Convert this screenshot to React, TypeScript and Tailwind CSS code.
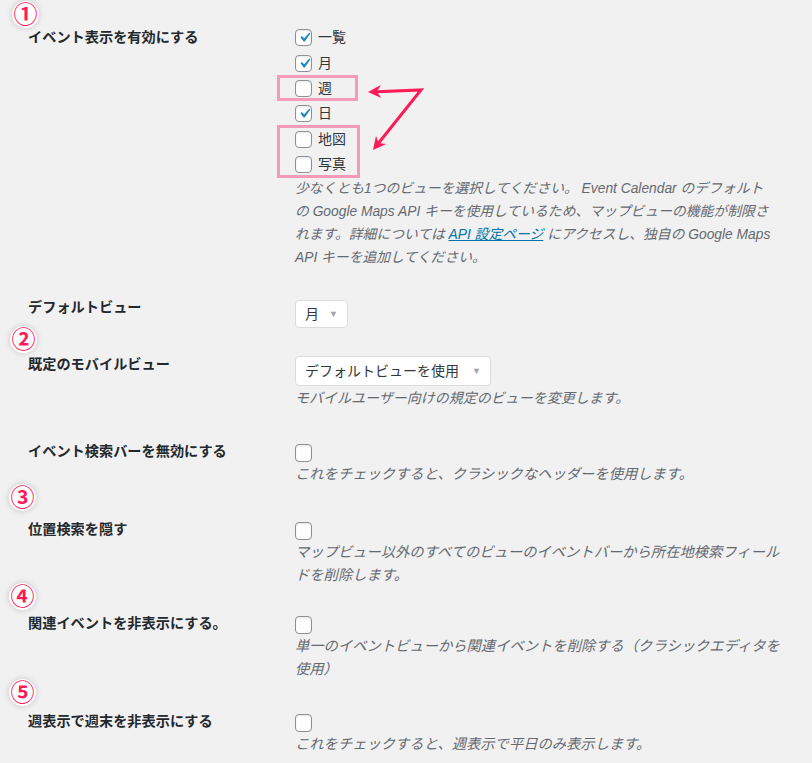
import React from 'react';

const FONT = '"Liberation Sans", "Noto Sans CJK JP", sans-serif';

const CheckMark = () => (
  <svg viewBox="0 0 20 20" className="absolute -left-[1px] -top-[2px] h-[19px] w-[19px]">
    <path d="M14.83 4.89l1.34.94-5.81 8.38H9.02L5.78 9.67l1.34-1.25 2.57 2.4z" fill="#1e8cbe" />
  </svg>
);

const Box: React.FC<{ checked?: boolean; tall?: boolean }> = ({ checked, tall }) => (
  <span
    className={`relative inline-block w-[17px] shrink-0 rounded-[4px] border border-[#8c8f94] bg-white shadow-[inset_0_1px_2px_rgba(0,0,0,0.1)] ${
      tall ? 'h-[18px]' : 'h-[17px]'
    }`}
  >
    {checked && <CheckMark />}
  </span>
);

const Desc: React.FC<{ lines: React.ReactNode[]; className?: string }> = ({ lines, className }) => (
  <div className={`italic leading-[23px] text-[#646970] ${className ?? 'text-[14px]'}`}>
    {lines.map((l, i) => (
      <div key={i} className="whitespace-nowrap">
        {l}
      </div>
    ))}
  </div>
);

const Label: React.FC<{ children: React.ReactNode }> = ({ children }) => (
  <div className="w-[267px] shrink-0 pl-[28px] text-[14.2px] font-bold leading-[20px] text-[#23282d]">
    {children}
  </div>
);

const Select: React.FC<{ value: string; w: string; h: string }> = ({ value, w, h }) => (
  <div
    className={`flex items-center justify-between rounded-[4px] border border-[#dcdcde] bg-white pl-[9px] pr-[9px] text-[14px] text-[#32373c] ${w} ${h}`}
  >
    <span>{value}</span>
    <span className="text-[9px] text-[#a0a5aa]">▼</span>
  </div>
);

const Badge: React.FC<{ n: string; className: string }> = ({ n, className }) => (
  <div
    className={`absolute flex h-[27px] w-[27px] items-center justify-center rounded-full bg-white text-[24px] font-bold leading-none text-[#ff1a5a] shadow-[0_0_6px_rgba(0,0,0,0.18)] ${className}`}
  >
    {n}
  </div>
);

const views = [
  { name: '一覧', checked: true },
  { name: '月', checked: true },
  { name: '週', checked: false },
  { name: '日', checked: true },
  { name: '地図', checked: false },
  { name: '写真', checked: false },
];

const CheckRow: React.FC<{ label: string; desc: React.ReactNode[]; mt: string }> = ({ label, desc, mt }) => (
  <div className={`flex ${mt}`}>
    <Label>{label}</Label>
    <div className="pl-[28px]">
      <div className="mt-[3px] flex">
        <Box tall />
      </div>
      <Desc lines={desc} className="mt-[1px] text-[14.3px]" />
    </div>
  </div>
);

export default function App() {
  return (
    <div className="relative h-[763px] w-[812px] overflow-hidden bg-[#f1f1f1]" style={{ fontFamily: FONT }}>
      <div className="pt-[25px]">
        {/* enabled views */}
        <div className="flex">
          <div className="w-[267px] shrink-0 pl-[28px] text-[14.2px] font-bold leading-[25.4px] text-[#23282d]">
            イベント表示を有効にする
          </div>
          <div className="pl-[28px]">
            {views.map((v) => (
              <div key={v.name} className="flex h-[25.4px] items-center gap-[6px] text-[14px] text-[#32373c]">
                <Box checked={v.checked} />
                <span>{v.name}</span>
              </div>
            ))}
            <Desc
              className="text-[13.8px]"
              lines={[
                '少なくとも1つのビューを選択してください。 Event Calendar のデフォルト',
                'の Google Maps API キーを使用しているため、マップビューの機能が制限さ',
                <>
                  れます。詳細については{' '}
                  <a className="text-[#0073aa] underline">API 設定ページ</a> にアクセスし、独自の Google Maps
                </>,
                'API キーを追加してください。',
              ]}
            />
          </div>
        </div>

        {/* default view */}
        <div className="mt-[28px] flex">
          <Label>デフォルトビュー</Label>
          <div className="pl-[28px] pt-[3px]">
            <Select value="月" w="w-[53px]" h="h-[28px]" />
          </div>
        </div>

        {/* mobile view */}
        <div className="mt-[26px] flex">
          <Label>既定のモバイルビュー</Label>
          <div className="pl-[28px] pt-[2px]">
            <Select value="デフォルトビューを使用" w="w-[196px]" h="h-[30px]" />
            <Desc lines={['モバイルユーザー向けの規定のビューを変更します。']} className="mt-[1px] text-[14px]" />
          </div>
        </div>

        <CheckRow
          mt="mt-[31px]"
          label="イベント検索バーを無効にする"
          desc={['これをチェックすると、クラシックなヘッダーを使用します。']}
        />
        <CheckRow
          mt="mt-[33px]"
          label="位置検索を隠す"
          desc={['マップビュー以外のすべてのビューのイベントバーから所在地検索フィール', 'ドを削除します。']}
        />
        <CheckRow
          mt="mt-[26px]"
          label="関連イベントを非表示にする。"
          desc={['単一のイベントビューから関連イベントを削除する（クラシックエディタを', '使用）']}
        />
        <CheckRow
          mt="mt-[30px]"
          label="週表示で週末を非表示にする"
          desc={['これをチェックすると、週表示で平日のみ表示します。']}
        />
      </div>

      {/* annotations */}
      <Badge n="①" className="left-[12px] top-[1px]" />
      <Badge n="②" className="left-[10px] top-[326px]" />
      <Badge n="③" className="left-[9px] top-[484px]" />
      <Badge n="④" className="left-[9px] top-[583px]" />
      <Badge n="⑤" className="left-[9px] top-[679px]" />

      <div className="absolute left-[277px] top-[75px] h-[26px] w-[81px] border-[3px] border-[#f59ab8]" />
      <div className="absolute left-[277px] top-[125px] h-[53px] w-[83px] border-[3px] border-[#f59ab8]" />

      <svg className="absolute left-0 top-0" width="812" height="763" viewBox="0 0 812 763">
        <polyline points="377,91.7 421,90 378.6,143" fill="none" stroke="#ff1a55" strokeWidth="3" strokeLinejoin="miter" />
        <polygon points="368,92 380.8,85 377,91.7 381.2,98" fill="#ff1a55" />
        <polygon points="373,150 376,135.7 378.6,143 386.2,143.9" fill="#ff1a55" />
      </svg>
    </div>
  );
}
